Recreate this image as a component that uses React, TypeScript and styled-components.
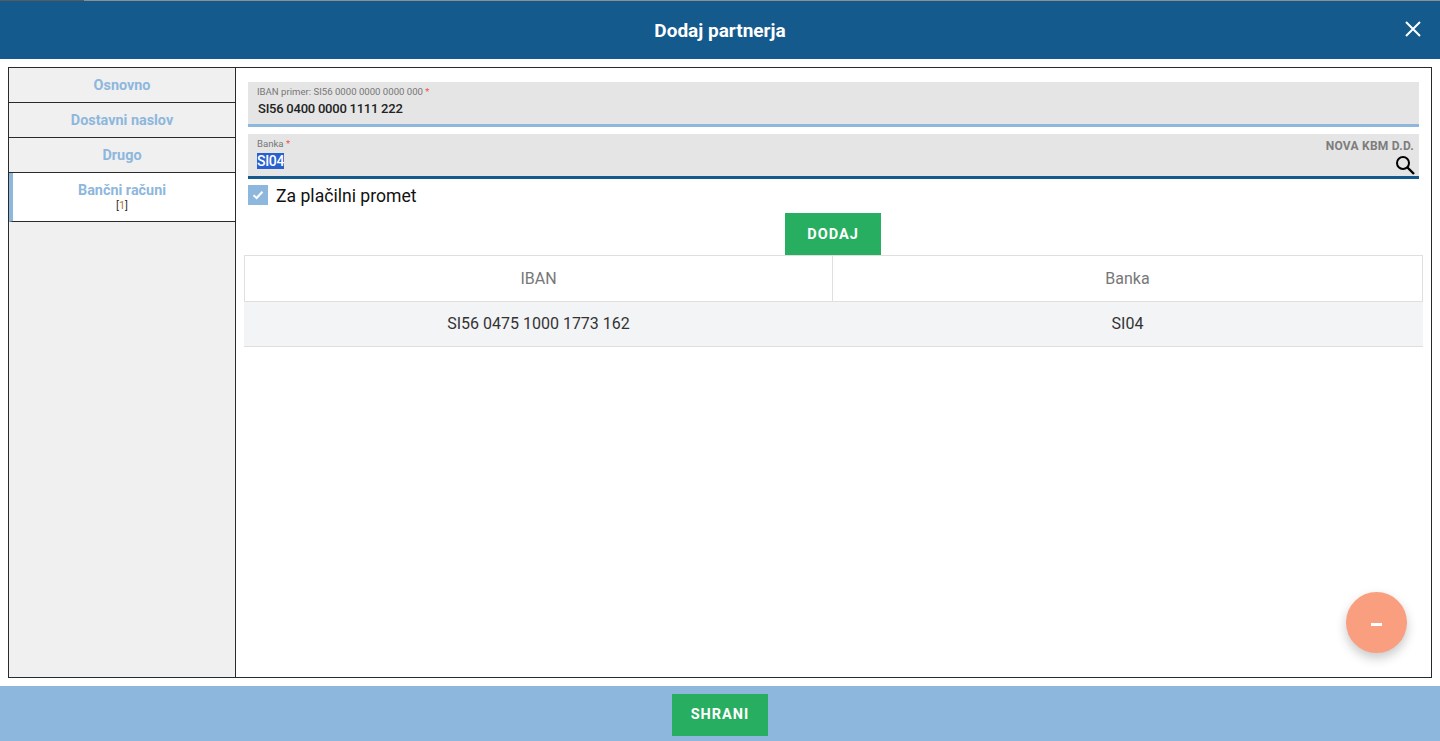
import styled, { createGlobalStyle } from "styled-components";

const GlobalStyle = createGlobalStyle`
    html, body {
        margin: 0;
        padding: 0;
        background: #fff;
        font-family: Roboto, "Liberation Sans", sans-serif;
    }
`;

const tabs = [
    { label: "Osnovno" },
    { label: "Dostavni naslov" },
    { label: "Drugo" },
    { label: "Bančni računi", count: 1, active: true },
];

const App = () => {
    return (
        <Page>
            <GlobalStyle />
            <TopStrip>
                <TopStripDark />
            </TopStrip>
            <Header>
                <Title>Dodaj partnerja</Title>
                <CloseButton aria-label="Zapri">
                    <svg width="16" height="16" viewBox="0 0 16 16">
                        <path d="M1 1L15 15M15 1L1 15" stroke="#fff" strokeWidth="2" fill="none" />
                    </svg>
                </CloseButton>
            </Header>
            <Body>
                <Frame>
                    <Sidebar>
                        {tabs.map((tab) => (
                            <Tab key={tab.label} $active={tab.active}>
                                <TabLabel>{tab.label}</TabLabel>
                                {tab.count !== undefined && (
                                    <TabCount>
                                        [<TabCountNumber>{tab.count}</TabCountNumber>]
                                    </TabCount>
                                )}
                            </Tab>
                        ))}
                    </Sidebar>
                    <Content>
                        <Form>
                            <Field $focused={false}>
                                <FieldLabel>
                                    IBAN primer: SI56 0000 0000 0000 000 <Required>*</Required>
                                </FieldLabel>
                                <IbanValue>SI56 0400 0000 1111 222</IbanValue>
                            </Field>
                            <Field $focused={true}>
                                <FieldLabel>
                                    Banka <Required>*</Required>
                                </FieldLabel>
                                <BankValue>
                                    <Selected>SI04</Selected>
                                </BankValue>
                                <BankName>NOVA KBM D.D.</BankName>
                                <SearchIcon width="20" height="20" viewBox="0 0 20 20">
                                    <circle cx="8" cy="8" r="6" stroke="#000" strokeWidth="2" fill="none" />
                                    <path d="M12.5 12.5L19 19" stroke="#000" strokeWidth="2.4" fill="none" />
                                </SearchIcon>
                            </Field>
                            <CheckRow>
                                <CheckBox>
                                    <svg width="12" height="10" viewBox="0 0 12 10">
                                        <path d="M1.5 5.2L4.6 8L10.5 1.8" stroke="#fff" strokeWidth="2" fill="none" />
                                    </svg>
                                </CheckBox>
                                <CheckLabel>Za plačilni promet</CheckLabel>
                            </CheckRow>
                        </Form>
                        <AddRow>
                            <GreenButton>DODAJ</GreenButton>
                        </AddRow>
                        <Table>
                            <colgroup>
                                <col width="588" />
                                <col />
                            </colgroup>
                            <thead>
                                <tr>
                                    <HeadCell>IBAN</HeadCell>
                                    <HeadCell>Banka</HeadCell>
                                </tr>
                            </thead>
                            <tbody>
                                <tr>
                                    <BodyCell>SI56 0475 1000 1773 162</BodyCell>
                                    <BodyCell>SI04</BodyCell>
                                </tr>
                            </tbody>
                        </Table>
                        <Fab aria-label="Odstrani">
                            <FabMinus />
                        </Fab>
                    </Content>
                </Frame>
            </Body>
            <Footer>
                <GreenButton>SHRANI</GreenButton>
            </Footer>
        </Page>
    );
};

export default App;

const Page = styled.div`
    height: 741px;
    display: flex;
    flex-direction: column;
    overflow: hidden;
`;

const TopStrip = styled.div`
    height: 1px;
    background: #8f8f8f;
`;

const TopStripDark = styled.div`
    width: 84px;
    height: 1px;
    background: #5a5a5a;
`;

const Header = styled.header`
    position: relative;
    height: 58px;
    background: #155a8d;
    display: flex;
    align-items: center;
    justify-content: center;
`;

const Title = styled.h1`
    margin: 0;
    font-size: 19px;
    font-weight: 700;
    color: #fff;
`;

const CloseButton = styled.button`
    position: absolute;
    right: 19px;
    top: 20px;
    width: 16px;
    height: 16px;
    padding: 0;
    border: 0;
    background: none;
    display: flex;
`;

const Body = styled.main`
    flex: 1;
    min-height: 0;
    padding: 8px;
`;

const Frame = styled.div`
    height: 100%;
    box-sizing: border-box;
    border: 1px solid #2a2a2a;
    display: flex;
`;

const Sidebar = styled.nav`
    width: 227px;
    flex-shrink: 0;
    box-sizing: border-box;
    background: #f0f0f0;
    border-right: 1px solid #2a2a2a;
`;

const Tab = styled.div<{ $active?: boolean }>`
    box-sizing: border-box;
    height: ${(p) => (p.$active ? "49px" : "35px")};
    padding-top: 2px;
    display: flex;
    flex-direction: column;
    align-items: center;
    justify-content: center;
    border-bottom: 1px solid #2a2a2a;
    border-left: ${(p) => (p.$active ? "4px solid #8db7dd" : "0")};
    padding-right: ${(p) => (p.$active ? "4px" : "0")};
    background: ${(p) => (p.$active ? "#fff" : "transparent")};
`;

const TabLabel = styled.span`
    font-size: 14.4px;
    font-weight: 700;
    line-height: 16px;
    color: #8db7dd;
`;

const TabCount = styled.span`
    font-size: 11px;
    line-height: 14px;
    color: #333;
`;

const TabCountNumber = styled.span`
    color: #b9791f;
`;

const Content = styled.section`
    position: relative;
    flex: 1;
    min-width: 0;
    padding: 14px 8px 0;
`;

const Form = styled.div`
    padding: 0 4px;
    display: flex;
    flex-direction: column;
    gap: 7px;
`;

const Field = styled.div<{ $focused: boolean }>`
    position: relative;
    box-sizing: border-box;
    height: 45px;
    padding: 4px 9px 0;
    background: #e5e5e5;
    border-bottom: 3px solid ${(p) => (p.$focused ? "#155a8d" : "#8db7dd")};
`;

const FieldLabel = styled.div`
    font-size: 9.6px;
    line-height: 11px;
    color: #777;
`;

const Required = styled.span`
    color: #f05545;
`;

const IbanValue = styled.div`
    margin-top: 4px;
    padding-left: 1px;
    font-size: 13px;
    font-weight: 500;
    letter-spacing: -0.24px;
    line-height: 16px;
    color: #222;
`;

const BankValue = styled.div`
    margin-top: 5px;
    font-size: 14px;
    font-weight: 500;
    letter-spacing: -0.3px;
    line-height: 15px;
    color: #222;
`;

const Selected = styled.span`
    background: #2a5fcf;
    color: #fff;
`;

const BankName = styled.div`
    position: absolute;
    right: 5px;
    top: 5px;
    font-size: 12px;
    font-weight: 700;
    letter-spacing: 0.25px;
    line-height: 14px;
    color: #7d7d7d;
`;

const SearchIcon = styled.svg`
    position: absolute;
    right: 4px;
    top: 21px;
`;

const CheckRow = styled.label`
    display: flex;
    align-items: center;
    gap: 8px;
    height: 20px;
    margin-top: -1px;
`;

const CheckBox = styled.span`
    width: 20px;
    height: 20px;
    background: #8db7dd;
    display: flex;
    align-items: center;
    justify-content: center;
`;

const CheckLabel = styled.span`
    padding-top: 2px;
    font-size: 17.6px;
    color: #111;
`;

const AddRow = styled.div`
    display: flex;
    justify-content: center;
    margin-top: 8px;
    padding-right: 1px;
`;

const GreenButton = styled.button`
    width: 96px;
    height: 42px;
    padding: 0;
    border: 0;
    background: #28ae60;
    color: #fff;
    font-family: Roboto, "Liberation Sans", sans-serif;
    font-size: 14.5px;
    font-weight: 700;
    letter-spacing: 1px;
`;

const Table = styled.table`
    width: 100%;
    table-layout: fixed;
    border-collapse: collapse;
`;

const HeadCell = styled.th`
    height: 46px;
    box-sizing: border-box;
    padding: 0;
    border: 1px solid #dfdfdf;
    font-size: 16px;
    font-weight: 400;
    color: #777;
`;

const BodyCell = styled.td`
    height: 45px;
    box-sizing: border-box;
    padding: 0 0 2px;
    text-align: center;
    background: #f3f4f6;
    border-left: 1px solid #f3f4f6;
    border-right: 1px solid #f3f4f6;
    border-bottom: 1px solid #dfdfdf;
    font-size: 16px;
    color: #333;
`;

const Fab = styled.button`
    position: absolute;
    right: 24px;
    bottom: 24px;
    width: 61px;
    height: 61px;
    padding: 0;
    border: 0;
    border-radius: 50%;
    background: #f99f7f;
    box-shadow: 0 5px 11px rgba(0, 0, 0, 0.22);
    display: flex;
    align-items: center;
    justify-content: center;
`;

const FabMinus = styled.span`
    width: 11px;
    height: 3px;
    margin-top: 4px;
    background: #fff;
`;

const Footer = styled.footer`
    height: 55px;
    padding-top: 2px;
    box-sizing: border-box;
    background: #8db7dd;
    display: flex;
    align-items: center;
    justify-content: center;
`;
